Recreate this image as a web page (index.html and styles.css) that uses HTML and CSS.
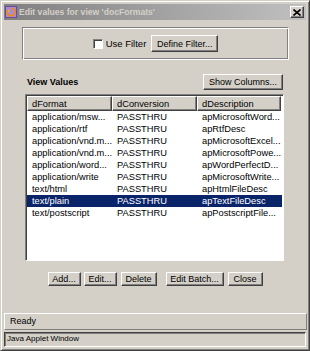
FILE: index.html
```
<!DOCTYPE html>
<html lang="en">
<head>
    <meta charset="UTF-8">
    <title>Edit values for view 'docFormats'</title>
    <link rel="stylesheet" href="styles.css">
</head>
<body>
    <div class="window">
        <!-- Title bar -->
        <div class="titlebar">
            <span class="app-icon">
                <svg width="12" height="12" viewBox="0 0 12 12">
                    <rect x="0.5" y="0.5" width="11" height="11" fill="#a88ad8" stroke="#6a4aa0"/>
                    <path d="M6 2.2 A3.8 3.8 0 1 1 2.6 4.2" fill="none" stroke="#f08a10" stroke-width="1.8"/>
                    <path d="M2.2 6.5 L3.6 3.2 L5 5.6" fill="#f0b020"/>
                </svg>
            </span>
            <span class="title">Edit values for view 'docFormats'</span>
            <span class="close-btn">
                <svg width="8" height="7" viewBox="0 0 8 7">
                    <path d="M0.5 0.5 L7.5 6.5 M7.5 0.5 L0.5 6.5" stroke="#000" stroke-width="1.6"/>
                </svg>
            </span>
        </div>

        <div class="dialog">
            <div class="filter-box">
                <label class="check"><span class="checkbox"></span>Use Filter</label>
                <button class="btn btn-tall">Define Filter...</button>
            </div>

            <div class="values-head">
                <span class="section-label">View Values</span>
                <button class="btn">Show Columns...</button>
            </div>

            <div class="table">
                <div class="thead">
                    <div class="th">dFormat</div>
                    <div class="th">dConversion</div>
                    <div class="th">dDescription</div>
                </div>
                <div class="row"><span>application/msw...</span><span>PASSTHRU</span><span>apMicrosoftWord...</span></div>
                <div class="row"><span>application/rtf</span><span>PASSTHRU</span><span>apRtfDesc</span></div>
                <div class="row"><span>application/vnd.m...</span><span>PASSTHRU</span><span>apMicrosoftExcel...</span></div>
                <div class="row"><span>application/vnd.m...</span><span>PASSTHRU</span><span>apMicrosoftPowe...</span></div>
                <div class="row"><span>application/word...</span><span>PASSTHRU</span><span>apWordPerfectD...</span></div>
                <div class="row"><span>application/write</span><span>PASSTHRU</span><span>apMicrosoftWrite...</span></div>
                <div class="row"><span>text/html</span><span>PASSTHRU</span><span>apHtmlFileDesc</span></div>
                <div class="row selected"><span>text/plain</span><span>PASSTHRU</span><span>apTextFileDesc</span></div>
                <div class="row"><span>text/postscript</span><span>PASSTHRU</span><span>apPostscriptFile...</span></div>
            </div>

            <div class="actions">
                <button class="btn btn-add">Add...</button>
                <button class="btn btn-edit">Edit...</button>
                <button class="btn btn-delete">Delete</button>
                <button class="btn btn-batch">Edit Batch...</button>
                <button class="btn btn-close">Close</button>
            </div>
        </div>

        <div class="status">Ready</div>
        <div class="applet-bar">Java Applet Window</div>
    </div>
</body>
</html>
```

FILE: styles.css
```
/* Global */
* {
    box-sizing: border-box;
}

body {
    margin: 0;
    background-color: #d4d0c8;
    font-family: "Liberation Sans", Arial, sans-serif;
    font-size: 9px;
    color: #000;
}

/* Window frame */
.window {
    width: 310px;
    height: 351px;
    display: flex;
    flex-direction: column;
    padding: 2px 2px 3px 2px;
    border: 1px solid;
    border-color: #d4d0c8 #404040 #404040 #d4d0c8;
    box-shadow: inset 1px 1px #fff, inset -1px -1px #808080;
    background-color: #d4d0c8;
}

/* Title bar */
.titlebar {
    height: 16px;
    margin: 1px 1px 0 1px;
    display: flex;
    align-items: center;
    padding: 0 2px 0 1px;
    background: linear-gradient(to right, #808080, #c0c0c0);
}

.app-icon {
    width: 12px;
    height: 12px;
    display: flex;
}

.title {
    margin-left: 2px;
    color: #d4d0c8;
    font-weight: bold;
    font-size: 8.6px;
    white-space: nowrap;
}

.close-btn {
    margin-left: auto;
    width: 14px;
    height: 12px;
    display: flex;
    align-items: center;
    justify-content: center;
    background-color: #d4d0c8;
    border: 1px solid;
    border-color: #fff #404040 #404040 #fff;
    box-shadow: inset -1px -1px #808080;
}

/* Dialog content */
.dialog {
    flex: 1;
    display: flex;
    flex-direction: column;
}

.filter-box {
    margin: 7px 18px 0 19px;
    height: 33px;
    display: flex;
    align-items: center;
    justify-content: center;
    gap: 5px;
    border: 1px solid;
    border-color: #808080 #fff #fff #808080;
    box-shadow: inset 1px 1px #fff, inset -1px -1px #808080;
}

.check {
    display: flex;
    align-items: center;
    gap: 3px;
    font-size: 9.5px;
}

.checkbox {
    width: 10px;
    height: 10px;
    background-color: #fff;
    border: 1px solid;
    border-color: #808080 #fff #fff #808080;
    box-shadow: inset 1px 1px #404040;
}

/* Buttons */
.btn {
    font-family: inherit;
    font-size: 9px;
    color: #000;
    height: 16px;
    padding: 0 4px;
    margin: 0;
    background-color: #d4d0c8;
    border: 1px solid;
    border-color: #fff #404040 #404040 #fff;
    box-shadow: inset -1px -1px #808080;
    border-radius: 0;
    white-space: nowrap;
}

.btn-tall {
    height: 17px;
    width: 67px;
}

.values-head {
    margin: 14px 24px 0 24px;
    display: flex;
    align-items: center;
    justify-content: space-between;
}

.section-label {
    font-weight: bold;
    font-size: 9px;
}

.values-head .btn {
    width: 80px;
}

/* Table */
.table {
    margin: 4px 23px 0 22px;
    height: 167px;
    background-color: #fff;
    border: 1px solid;
    border-color: #808080 #fff #fff #808080;
    box-shadow: inset 1px 1px #404040;
    padding: 1px 1px 0 1px;
}

.thead {
    display: flex;
    height: 15px;
}

.th {
    width: 85px;
    padding: 2px 0 0 4px;
    background-color: #d4d0c8;
    border: 1px solid;
    border-color: #fff #404040 #404040 #fff;
    box-shadow: inset -1px -1px #808080;
    font-size: 9.3px;
}

.th:last-child {
    width: 84px;
}

.row {
    display: flex;
    height: 12px;
    line-height: 12px;
    font-size: 9.3px;
    white-space: nowrap;
}

.row span {
    width: 85px;
    padding-left: 5px;
    overflow: hidden;
}

.row.selected {
    background-color: #0a246a;
    color: #fff;
}

/* Bottom buttons */
.actions {
    margin-top: 11px;
    display: flex;
    justify-content: center;
    gap: 3px;
}

.actions .btn {
    height: 14px;
    padding: 0;
}

.btn-add { width: 33px; }
.btn-edit { width: 33px; margin-right: 1px; }
.btn-delete { width: 36px; margin-right: 6px; }
.btn-batch { width: 58px; margin-right: 1px; }
.btn-close { width: 35px; }

/* Status bars */
.status {
    height: 17px;
    margin: 0 0 2px 1px;
    padding: 2px 0 0 5px;
    border: 1px solid;
    border-color: #fff #808080 #808080 #fff;
    font-size: 9px;
}

.applet-bar {
    height: 15px;
    margin: 0 1px 0 1px;
    padding: 1px 0 0 2px;
    border: 1px solid;
    border-color: #404040 #fff #fff #404040;
    box-shadow: inset 1px 1px #808080;
    font-size: 8px;
}
```
